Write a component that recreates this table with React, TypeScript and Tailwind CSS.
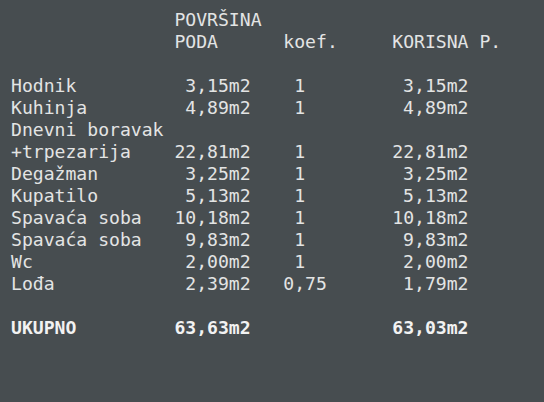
type Row = {
  name: string;
  area?: string;
  koef?: string;
  useful?: string;
  bold?: boolean;
};

const rows: (Row | null)[] = [
  { name: 'Hodnik', area: '3,15m2', koef: ' 1', useful: '3,15m2' },
  { name: 'Kuhinja', area: '4,89m2', koef: ' 1', useful: '4,89m2' },
  { name: 'Dnevni boravak' },
  { name: '+trpezarija', area: '22,81m2', koef: ' 1', useful: '22,81m2' },
  { name: 'Degažman', area: '3,25m2', koef: ' 1', useful: '3,25m2' },
  { name: 'Kupatilo', area: '5,13m2', koef: ' 1', useful: '5,13m2' },
  { name: 'Spavaća soba', area: '10,18m2', koef: ' 1', useful: '10,18m2' },
  { name: 'Spavaća soba', area: '9,83m2', koef: ' 1', useful: '9,83m2' },
  { name: 'Wc', area: '2,00m2', koef: ' 1', useful: '2,00m2' },
  { name: 'Lođa', area: '2,39m2', koef: '0,75', useful: '1,79m2' },
  null,
  { name: 'UKUPNO', area: '63,63m2', useful: '63,03m2', bold: true },
];

function Line({ row }: { row: Row }) {
  return (
    <div className={`flex h-[22px] items-center ${row.bold ? 'font-bold text-[#f2f2f2]' : ''}`}>
      <span className="w-[15ch] shrink-0 whitespace-pre">{row.name}</span>
      <span className="w-[7ch] shrink-0 whitespace-pre text-right">{row.area ?? ''}</span>
      <span className="w-[3ch] shrink-0" />
      <span className="w-[10ch] shrink-0 whitespace-pre">{row.koef ?? ''}</span>
      <span className="w-[7ch] shrink-0 whitespace-pre text-right">{row.useful ?? ''}</span>
    </div>
  );
}

export default function App() {
  return (
    <div className="h-[402px] w-[544px] bg-[#474d50] pl-[11px] pt-[9px] font-['DejaVu_Sans_Mono',monospace] text-[18.1px] leading-[22px] text-[#e3e4e4]">
      <div className="flex h-[22px] items-center">
        <span className="w-[15ch] shrink-0" />
        <span className="whitespace-pre">POVRŠINA</span>
      </div>
      <div className="flex h-[22px] items-center">
        <span className="w-[15ch] shrink-0" />
        <span className="w-[10ch] shrink-0 whitespace-pre">PODA</span>
        <span className="w-[10ch] shrink-0 whitespace-pre">koef.</span>
        <span className="whitespace-pre">KORISNA P.</span>
      </div>
      <div className="h-[22px]" />
      {rows.map((row, i) =>
        row ? <Line key={i} row={row} /> : <div key={i} className="h-[22px]" />
      )}
    </div>
  );
}
